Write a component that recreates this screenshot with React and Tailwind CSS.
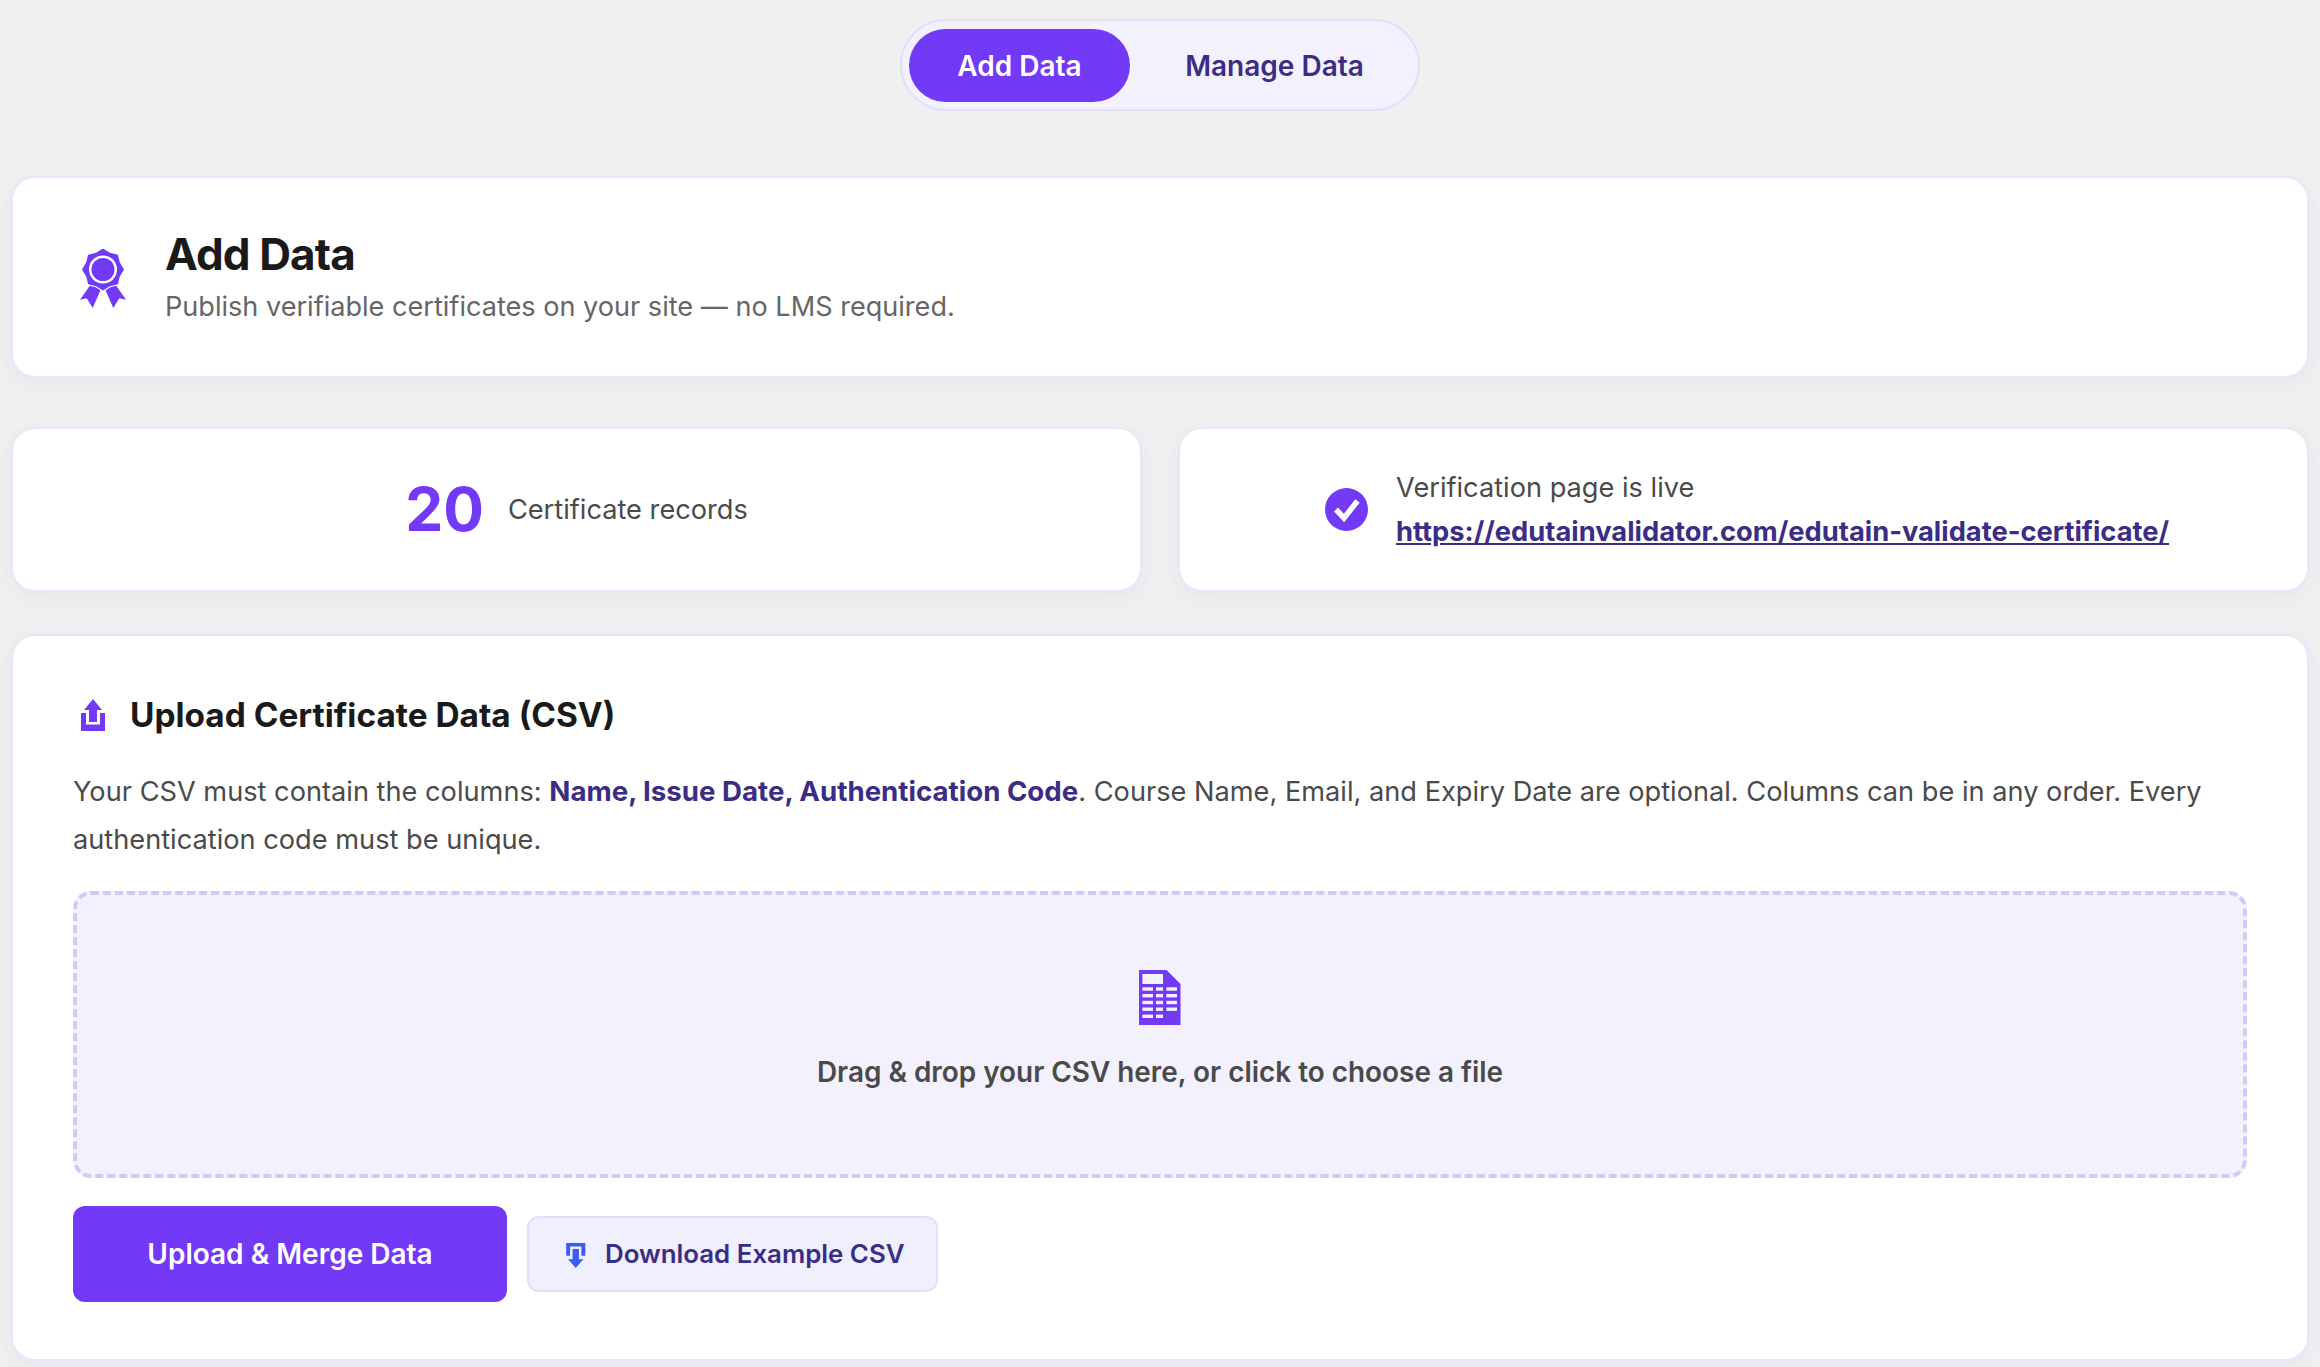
function Award({ className }) {
  const pts = [];
  for (let i = 0; i < 16; i++) {
    const a = ((i * 22.5 - 90) * Math.PI) / 180;
    const r = i % 2 === 0 ? 21 : 18.2;
    pts.push(`${(23 + r * Math.cos(a)).toFixed(2)},${(20.5 + r * Math.sin(a)).toFixed(2)}`);
  }
  return (
    <svg viewBox="0 0 46 59" className={className} aria-hidden="true">
      <path d="M11.7 34 21 40 12.7 59 6.7 49.3 0 50.7Z" fill="#7239f6" />
      <path d="M34.3 34 25 40 33.3 59 39.3 49.3 46 50.7Z" fill="#7239f6" />
      <polygon points={pts.join(" ")} fill="#7239f6" stroke="#ffffff" strokeWidth="2" />
      <polygon points={pts.join(" ")} fill="#7239f6" />
      <circle cx="23" cy="20.5" r="14" fill="#ffffff" />
      <circle cx="23" cy="20.5" r="11.5" fill="#7239f6" />
    </svg>
  );
}

function CheckCircle({ className }) {
  return (
    <svg viewBox="0 0 43 43" className={className} aria-hidden="true">
      <circle cx="21.5" cy="21.5" r="21.5" fill="#7239f6" />
      <path d="M11 21.5 19 30 32.5 13" fill="none" stroke="#fff" strokeWidth="5.5" />
    </svg>
  );
}

function UploadIcon({ className }) {
  return (
    <svg viewBox="0 0 24 32" className={className} fill="#7239f6" aria-hidden="true">
      <path d="M12 0 21 11H16V23H8V11H3Z" />
      <path d="M0 14H5V25.5H19V14H24V32H0Z" />
    </svg>
  );
}

function SheetIcon({ className }) {
  const rows = [17.3, 24, 30.8, 37.5, 44.6];
  return (
    <svg viewBox="0 0 42 55" className={className} aria-hidden="true">
      <path d="M0 0H27.5L41.5 14V55H0Z" fill="#7239f6" />
      <rect x="3.4" y="4" width="20.6" height="10" fill="#f3f1fe" />
      {rows.map((y, i) => (
        <g key={y} fill="#f3f1fe">
          <rect x="3.4" y={y} width="10.6" height="3.4" />
          <rect x="17" y={y} width="7" height="3.4" />
          {i < 4 && <rect x="27.4" y={y} width="10.6" height="3.4" />}
        </g>
      ))}
    </svg>
  );
}

function DownloadIcon({ className }) {
  return (
    <svg viewBox="0 0 20 25.5" className={className} fill="#3b5bf5" aria-hidden="true">
      <path d="M0 0H19.5V13H15.5V3.5H4V13H0Z" />
      <path d="M6.5 6H13V16.7H17.5L9.75 25.5 2 16.7H6.5Z" />
    </svg>
  );
}

const cardClass =
  "bg-white border-2 border-[#e9e6fb] rounded-[24px] shadow-[0_6px_20px_rgba(60,50,120,0.05)]";

export default function App() {
  return (
    <div
      className="min-h-screen bg-[#f0f0f1] px-[11px] pt-[19px] pb-[7px] flex flex-col text-[#1a1a1a]"
      style={{ fontFamily: "Inter, 'Liberation Sans', sans-serif" }}
    >
      <div className="flex justify-center">
        <div className="flex items-center h-[92px] w-[520px] rounded-full border-2 border-[#e2dffb] bg-[#f3f1fe] px-[7px]">
          <button className="h-[73px] w-[221px] pt-[2px] rounded-full text-[28px] font-semibold text-white bg-[#7239f6]">
            Add Data
          </button>
          <button className="flex-1 h-[73px] pt-[2px] pl-[8px] rounded-full text-[28px] font-semibold text-[#3b2d85]">
            Manage Data
          </button>
        </div>
      </div>

      <section className={`${cardClass} mt-[65px] h-[202px] flex items-center pl-[67px]`}>
        <Award className="w-[46px] h-[59px] mt-[2px] shrink-0" />
        <div className="ml-[39px]">
          <h1 className="text-[44px] leading-[52px] font-bold tracking-[-0.88px] text-[#1a1a1a]">Add Data</h1>
          <p className="text-[27.1px] leading-[38px] mt-[8px] text-[#666666]">
            Publish verifiable certificates on your site — no LMS required.
          </p>
        </div>
      </section>

      <div className="mt-[49px] grid grid-cols-2 gap-[36px]">
        <div className={`${cardClass} h-[165px] flex items-center justify-center gap-[24px]`}>
          <span className="text-[60.4px] leading-none font-bold text-[#7239f6]">20</span>
          <span className="mt-[2px] text-[27.2px] text-[#4a4a4a]">Certificate records</span>
        </div>
        <div className={`${cardClass} h-[165px] flex items-center pl-[145px]`}>
          <CheckCircle className="w-[43px] h-[43px] shrink-0" />
          <div className="ml-[28px]">
            <div className="text-[27.2px] leading-[44px] text-[#4a4a4a]">Verification page is live</div>
            <a href="#" className="text-[27.3px] leading-[44px] font-bold text-[#3b2d85] underline block">
              https://edutainvalidator.com/edutain-validate-certificate/
            </a>
          </div>
        </div>
      </div>

      <section className={`${cardClass} mt-[42px] px-[60px] pt-[57px] pb-[57px]`}>
        <div className="flex items-center">
          <UploadIcon className="w-[24px] h-[32px] ml-[8px] shrink-0" />
          <h2 className="ml-[25px] text-[33.4px] leading-[44px] font-bold text-[#1a1a1a]">
            Upload Certificate Data (CSV)
          </h2>
        </div>
        <p className="mt-[30px] text-[27.2px] leading-[48px] text-[#4a4a4a]">
          Your CSV must contain the columns:{" "}
          <strong className="font-bold text-[27.66px] text-[#3b2d85]">Name, Issue Date, Authentication Code</strong>. Course Name,
          Email, and Expiry Date are optional. Columns can be in any order. Every authentication code must be unique.
        </p>
        <div className="mt-[27px] h-[287px] rounded-[18px] border-[4px] border-dashed border-[#d2c9f7] bg-[#f3f1fe] flex flex-col items-center pt-[75px]">
          <SheetIcon className="w-[42px] h-[55px]" />
          <div className="mt-[27px] text-[27.9px] leading-[40px] font-semibold text-[#4a4a4a]">
            Drag &amp; drop your CSV here, or click to choose a file
          </div>
        </div>
        <div className="mt-[28px] flex items-center gap-[20px]">
          <button className="h-[96px] w-[434px] rounded-[12px] bg-[#7239f6] text-white text-[28px] font-semibold">
            Upload &amp; Merge Data
          </button>
          <button className="h-[76px] w-[411px] rounded-[12px] border-2 border-[#e2dffb] bg-[#f0effd] text-[#3b2d85] text-[25.85px] font-semibold flex items-center pl-[37px]">
            <DownloadIcon className="w-[20px] h-[25px] mt-[2px] shrink-0" />
            <span className="ml-[19px]">Download Example CSV</span>
          </button>
        </div>
      </section>
    </div>
  );
}
